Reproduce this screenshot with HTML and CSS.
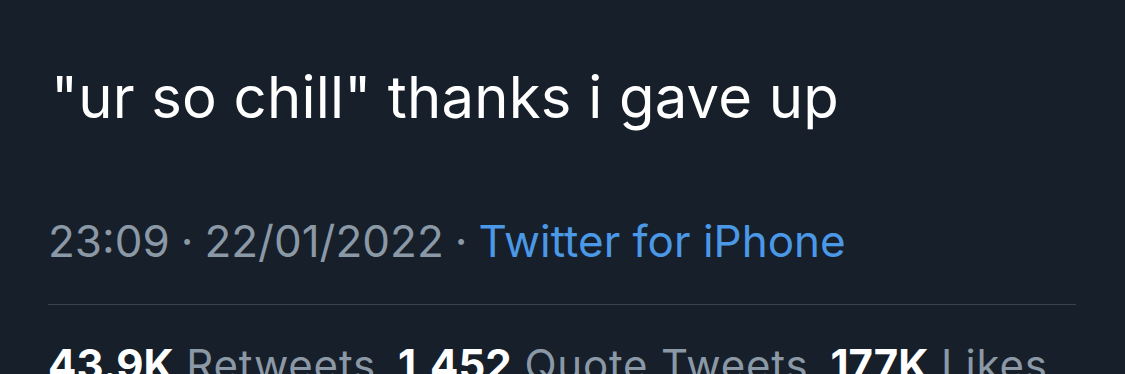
FILE: index.html
```html
<!DOCTYPE html>
<html lang="en">
<head>
  <meta charset="UTF-8" />
  <meta name="viewport" content="width=device-width, initial-scale=1.0"/>
  <title>Tweet</title>
  <link rel="stylesheet" href="styles.css">
</head>
<body>
  <article class="tweet">
    <p class="tweet-text">"ur so chill" thanks i gave up</p>

    <div class="meta">
      <span>23:09</span>
      <span class="dot">·</span>
      <span>22/01/2022</span>
      <span class="dot">·</span>
      <a href="#" class="source">Twitter for iPhone</a>
    </div>

    <div class="stats">
      <span><b>43.9K</b> Retweets</span>
      <span><b>1,452</b> Quote Tweets</span>
      <span><b>177K</b> Likes</span>
    </div>
  </article>
</body>
</html>
```

FILE: styles.css
```css
:root {
  --bg-color: #161f2a;
  --text-color: #ffffff;
  --muted: #8b98a5;
  --link: #4a98e6;
  --line: #38444d;
}

body {
  margin: 0;
  padding: 0;
  background: var(--bg-color);
  color: var(--text-color);
  font-family: 'Inter', 'Liberation Sans', sans-serif;
  height: 374px;
  overflow: hidden;
}

.tweet {
  padding: 0 49px 0 48px;
}

.tweet-text {
  margin: 0;
  padding-top: 62px;
  padding-left: 3px;
  font-size: 58px;
  line-height: 70px;
  letter-spacing: 0.2px;
}

.meta {
  margin-top: 83px;
  font-size: 44px;
  line-height: 52px;
  color: var(--muted);
  display: flex;
  gap: 11px;
  padding-bottom: 37px;
  border-bottom: 1px solid var(--line);
}

.source {
  color: var(--link);
  text-decoration: none;
}

.stats {
  display: flex;
  gap: 22px;
  margin-top: 35px;
  font-size: 42px;
  line-height: 50px;
  color: var(--muted);
  letter-spacing: 0.8px;
}

.stats b {
  color: var(--text-color);
  font-weight: 700;
  letter-spacing: 0;
}
```
